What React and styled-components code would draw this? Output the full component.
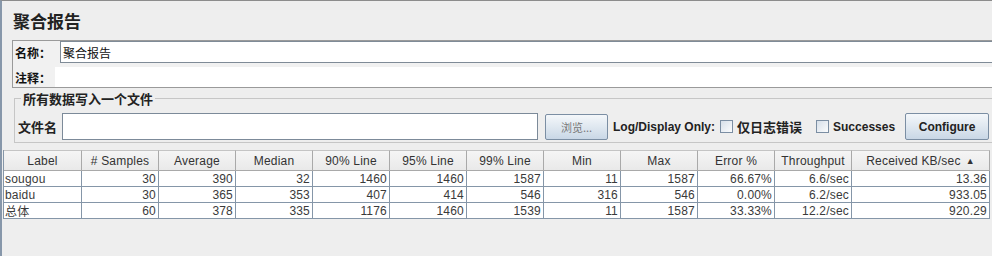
import React from "react";
import styled, { createGlobalStyle } from "styled-components";

const GlobalStyle = createGlobalStyle`
  body {
    margin: 0;
    background: #eeeeee;
    font-family: "Liberation Sans", Arial, "Noto Sans CJK SC", sans-serif;
  }
`;

const columns = [
  { title: "Label", width: 78 },
  { title: "# Samples", width: 77 },
  { title: "Average", width: 77 },
  { title: "Median", width: 77 },
  { title: "90% Line", width: 77 },
  { title: "95% Line", width: 77 },
  { title: "99% Line", width: 77 },
  { title: "Min", width: 77 },
  { title: "Max", width: 77 },
  { title: "Error %", width: 77 },
  { title: "Throughput", width: 77 },
  { title: "Received KB/sec", width: 138, sorted: true },
];

const rows = [
  ["sougou", "30", "390", "32", "1460", "1460", "1587", "11", "1587", "66.67%", "6.6/sec", "13.36"],
  ["baidu", "30", "365", "353", "407", "414", "546", "316", "546", "0.00%", "6.2/sec", "933.05"],
  ["总体", "60", "378", "335", "1176", "1460", "1539", "11", "1587", "33.33%", "12.2/sec", "920.29"],
];

const App = () => {
  return (
    <Frame>
      <GlobalStyle />
      <Title>聚合报告</Title>

      <NamePanel>
        <NameRow>
          <FieldLabel $width={45}>名称：</FieldLabel>
          <NameInput>聚合报告</NameInput>
        </NameRow>
        <CommentRow>
          <FieldLabel $width={40}>注释：</FieldLabel>
          <CommentInput />
        </CommentRow>
      </NamePanel>

      <FileGroup>
        <Legend>所有数据写入一个文件</Legend>
        <FileRow>
          <FileLabel>文件名</FileLabel>
          <FileInput />
          <BrowseButton>浏览...</BrowseButton>
          <BoldText $gap={5}>Log/Display Only:</BoldText>
          <CheckBox $gap={5} />
          <BoldText $gap={4} $cjk>仅日志错误</BoldText>
          <CheckBox $gap={14} />
          <BoldText $gap={4}>Successes</BoldText>
          <ConfigureButton>Configure</ConfigureButton>
        </FileRow>
      </FileGroup>

      <Table $cols={columns.map((c) => c.width + "px").join(" ")}>
        {columns.map((c) => (
          <HeadCell key={c.title}>
            {c.title}
            {c.sorted && <SortArrow>▲</SortArrow>}
          </HeadCell>
        ))}
        {rows.map((r) =>
          r.map((v, i) => (
            <Cell key={r[0] + i} $left={i === 0}>
              {v}
            </Cell>
          ))
        )}
      </Table>
    </Frame>
  );
};

export default App;

const Frame = styled.div`
  width: 992px;
  height: 256px;
  box-sizing: border-box;
  overflow: hidden;
  border-top: 1px solid #8c8c8c;
  border-left: 2px solid #8797aa;
  background: #eeeeee;
`;

const Title = styled.div`
  height: 39px;
  box-sizing: border-box;
  padding: 9px 0 0 11px;
  font-family: "Noto Sans CJK SC", sans-serif;
  font-size: 17px;
  font-weight: 700;
  line-height: 22px;
  color: #222;
`;

const NamePanel = styled.div`
  margin-left: 10px;
  border: 1px solid #9a9a9a;
  border-right: none;
  background: #f1f1f1;
  display: flex;
  flex-direction: column;
  gap: 4px;
`;

const NameRow = styled.div`
  display: flex;
  align-items: stretch;
  height: 22px;
`;

const CommentRow = styled.div`
  display: flex;
  height: 20px;
`;

const FieldLabel = styled.div`
  width: ${(p) => p.$width}px;
  flex-shrink: 0;
  padding-left: 2px;
  display: flex;
  align-items: center;
  font-family: "Noto Sans CJK SC", sans-serif;
  font-size: 12px;
  font-weight: 700;
  color: #111;
`;

const NameInput = styled.div`
  flex: 1;
  background: #fff;
  border: 1px solid #7f8b97;
  border-right: none;
  padding-left: 2px;
  display: flex;
  align-items: center;
  font-family: "Noto Sans CJK SC", sans-serif;
  font-size: 12px;
  color: #111;
`;

const CommentInput = styled.div`
  flex: 1;
  background: #fff;
`;

const FileGroup = styled.fieldset`
  margin: 3px 0 0 12px;
  padding: 7px 0 2px 3px;
  border: 1px solid #c6c6c6;
  border-right: none;
`;

const Legend = styled.legend`
  margin-left: 3px;
  padding: 0 2px;
  font-family: "Noto Sans CJK SC", sans-serif;
  font-size: 13px;
  font-weight: 700;
  line-height: 15px;
  color: #222;
`;

const FileRow = styled.div`
  display: flex;
  align-items: center;
  height: 27px;
`;

const FileLabel = styled.span`
  width: 44px;
  font-family: "Noto Sans CJK SC", sans-serif;
  font-size: 13px;
  font-weight: 700;
  color: #222;
`;

const FileInput = styled.div`
  width: 476px;
  height: 27px;
  box-sizing: border-box;
  flex-shrink: 0;
  background: #fff;
  border: 1px solid #7c8a99;
`;

const Button = styled.div`
  flex-shrink: 0;
  box-sizing: border-box;
  display: flex;
  align-items: center;
  justify-content: center;
  border: 1px solid #7b8ea3;
  border-radius: 2px;
  background: linear-gradient(#f4f7fa, #dde6ef 55%, #c9d7e6);
`;

const BrowseButton = styled(Button)`
  margin-left: 7px;
  width: 63px;
  height: 26px;
  font-family: "Noto Sans CJK SC", sans-serif;
  font-size: 11px;
  color: #777;
`;

const ConfigureButton = styled(Button)`
  margin-left: 10px;
  width: 84px;
  height: 27px;
  font-size: 12px;
  font-weight: 700;
  color: #222;
`;

const BoldText = styled.span`
  flex-shrink: 0;
  margin-left: ${(p) => p.$gap}px;
  font-family: ${(p) =>
    p.$cjk ? '"Noto Sans CJK SC", sans-serif' : '"Liberation Sans", Arial, sans-serif'};
  font-size: ${(p) => (p.$cjk ? 13 : 12)}px;
  font-weight: 700;
  color: #222;
`;

const CheckBox = styled.span`
  flex-shrink: 0;
  margin-left: ${(p) => p.$gap}px;
  width: 13px;
  height: 13px;
  box-sizing: border-box;
  border: 1px solid #7b8ea3;
  background: linear-gradient(135deg, #d6dfe9, #fbfcfd);
`;

const Table = styled.div`
  margin: 7px 0 0 1px;
  display: grid;
  grid-template-columns: ${(p) => p.$cols};
  grid-template-rows: 21px repeat(3, 16px);
  width: max-content;
  border-left: 1px solid #8596a8;
  font-family: "Liberation Sans", Arial, sans-serif;
  font-size: 12px;
`;

const HeadCell = styled.div`
  box-sizing: border-box;
  display: flex;
  align-items: center;
  justify-content: center;
  gap: 5px;
  border-right: 1px solid #a9a9a9;
  border-bottom: 1px solid #a9a9a9;
  border-top: 1px solid #c4c4c4;
  background: linear-gradient(#f5f5f5, #e9e9e9);
  color: #333;
  white-space: nowrap;
  letter-spacing: 0.2px;
`;

const SortArrow = styled.span`
  font-size: 9px;
  color: #333;
`;

const Cell = styled.div`
  box-sizing: border-box;
  display: flex;
  align-items: center;
  justify-content: ${(p) => (p.$left ? "flex-start" : "flex-end")};
  padding: ${(p) => (p.$left ? "0 0 0 1px" : "0 2px 0 0")};
  border-right: 1px solid #8596a8;
  border-bottom: 1px solid #8596a8;
  background: #fff;
  color: #3a3a3a;
  white-space: nowrap;
  letter-spacing: 0.2px;
  font-family: ${(p) =>
    p.$left ? '"Liberation Sans", Arial, "Noto Sans CJK SC", sans-serif' : "inherit"};
`;
